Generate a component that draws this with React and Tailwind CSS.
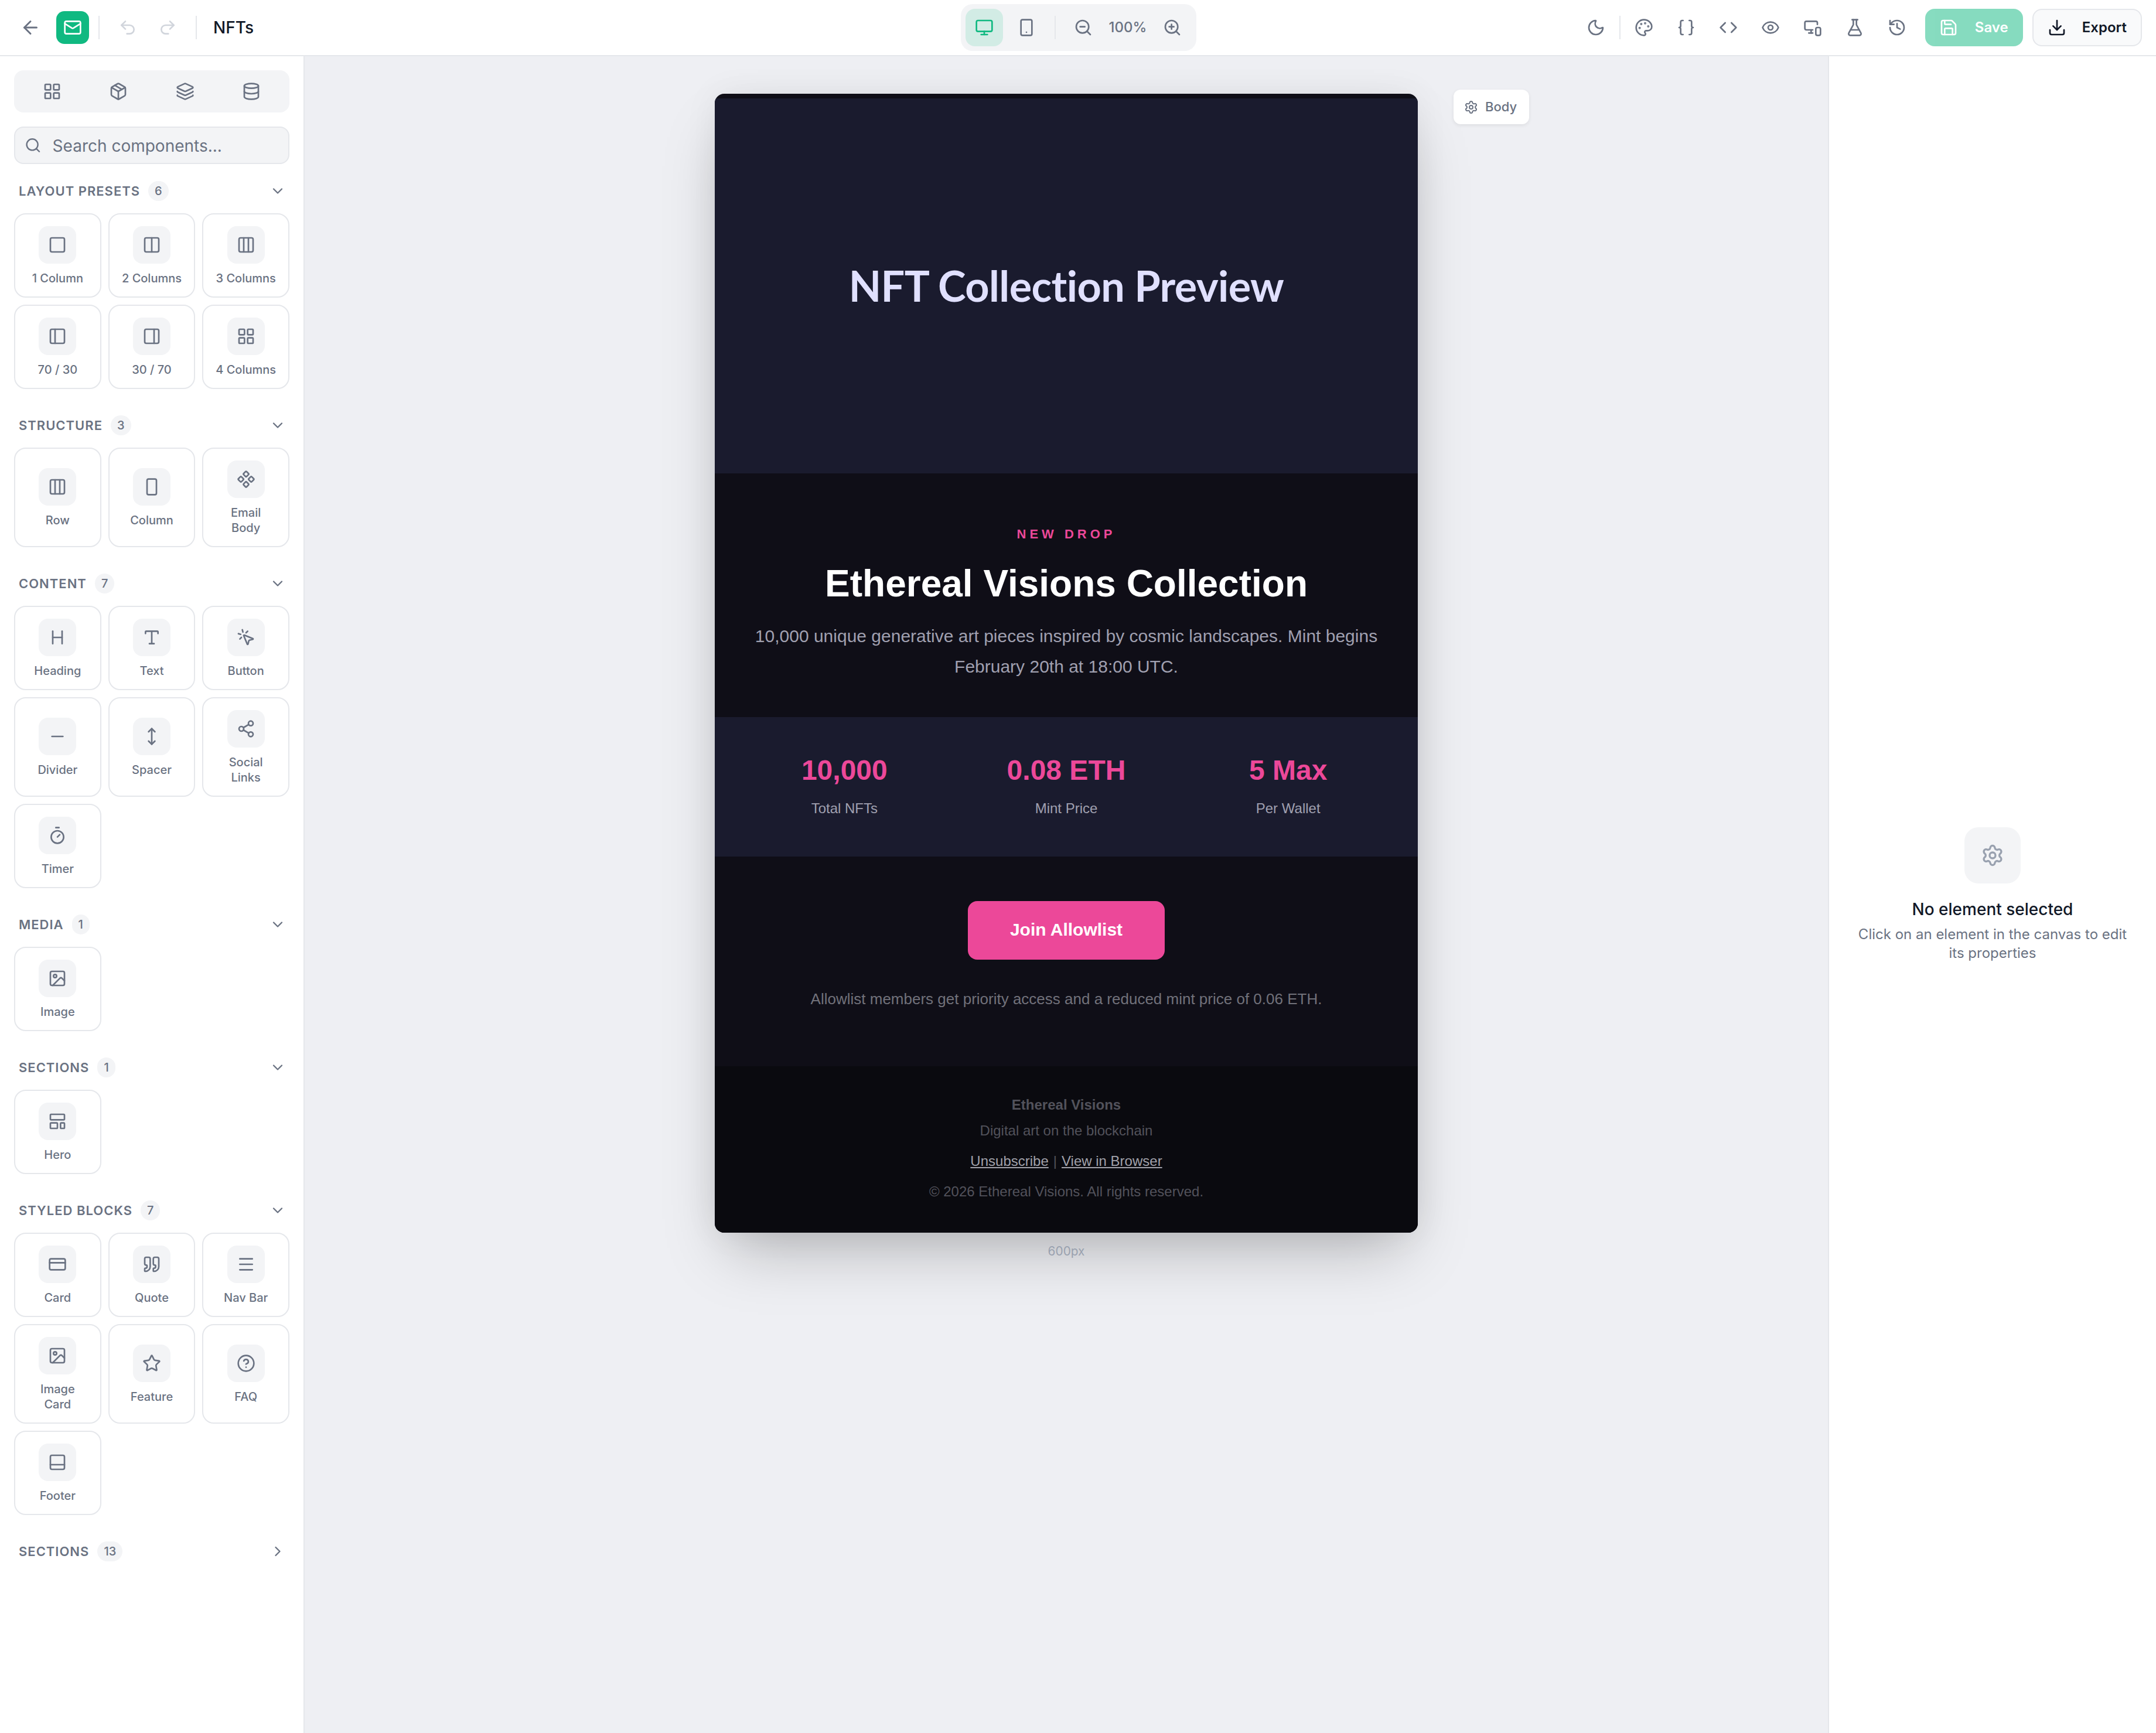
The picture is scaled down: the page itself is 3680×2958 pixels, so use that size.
import React from 'react';
import {
  ArrowLeft, Mail, Undo2, Redo2, Monitor, Smartphone, ZoomOut, ZoomIn, Moon, Palette, Braces, Code,
  Eye, MonitorSmartphone, FlaskConical, History, Save, Download, LayoutGrid, Package, Layers, Database,
  Search, ChevronDown, ChevronRight, Square, Columns2, Columns3, PanelLeft, PanelRight, RectangleVertical,
  Component, Heading, Type, MousePointerClick, Minus, MoveVertical, Share2, Timer, Image, LayoutTemplate,
  CreditCard, Quote, Menu, Star, CircleHelp, PanelBottom, Settings,
} from 'lucide-react';

const sections = [
  {
    title: 'LAYOUT PRESETS',
    items: [
      ['1 Column', Square], ['2 Columns', Columns2], ['3 Columns', Columns3],
      ['70 / 30', PanelLeft], ['30 / 70', PanelRight], ['4 Columns', LayoutGrid],
    ],
  },
  {
    title: 'STRUCTURE',
    items: [['Row', Columns3], ['Column', RectangleVertical], ['Email\nBody', Component]],
  },
  {
    title: 'CONTENT',
    items: [
      ['Heading', Heading], ['Text', Type], ['Button', MousePointerClick], ['Divider', Minus],
      ['Spacer', MoveVertical], ['Social\nLinks', Share2], ['Timer', Timer],
    ],
  },
  { title: 'MEDIA', items: [['Image', Image]] },
  { title: 'SECTIONS', items: [['Hero', LayoutTemplate]] },
  {
    title: 'STYLED BLOCKS',
    items: [
      ['Card', CreditCard], ['Quote', Quote], ['Nav Bar', Menu], ['Image\nCard', Image],
      ['Feature', Star], ['FAQ', CircleHelp], ['Footer', PanelBottom],
    ],
  },
];

const toolIcons = [Palette, Braces, Code, Eye, MonitorSmartphone, FlaskConical, History];
const stats = [['10,000', 'Total NFTs'], ['0.08 ETH', 'Mint Price'], ['5 Max', 'Per Wallet']];

const ToolButton = ({ icon: Icon }) => (
  <button className="flex h-[64px] w-[72px] items-center justify-center text-gray-500">
    <Icon size={32} />
  </button>
);

const Header = () => (
  <header className="grid h-[96px] shrink-0 grid-cols-[1fr_auto_1fr] items-center border-b-2 border-[#e5e7eb] bg-white">
    <div className="flex items-center pl-[32px]">
      <button className="flex w-[40px] justify-center text-gray-500"><ArrowLeft size={36} /></button>
      <div className="ml-[24px] flex h-[56px] w-[56px] items-center justify-center rounded-[14px] bg-[#10b981] text-white">
        <Mail size={32} />
      </div>
      <div className="ml-[16px] h-[40px] w-[2px] bg-[#e5e7eb]" />
      <div className="ml-[20px] flex gap-[12px] text-gray-300">
        <button className="flex w-[56px] justify-center"><Undo2 size={32} /></button>
        <button className="flex w-[56px] justify-center"><Redo2 size={32} /></button>
      </div>
      <div className="ml-[20px] h-[40px] w-[2px] bg-[#e5e7eb]" />
      <h1 className="ml-[28px] text-[28px] font-medium text-[#111827]">NFTs</h1>
    </div>

    <div className="ml-[2px] flex h-[80px] w-[402px] items-center rounded-[20px] bg-[#f3f4f6] pl-[8px]">
      <button className="flex h-[64px] w-[64px] items-center justify-center rounded-[16px] bg-[#d2ece5] text-[#10b981]">
        <Monitor size={32} />
      </button>
      <button className="ml-[8px] flex h-[64px] w-[64px] items-center justify-center text-gray-500">
        <Smartphone size={32} />
      </button>
      <div className="ml-[16px] h-[40px] w-[2px] bg-[#e5e7eb]" />
      <button className="ml-[19px] flex w-[56px] justify-center text-gray-500"><ZoomOut size={32} /></button>
      <span className="w-[96px] text-center text-[24px] font-medium text-gray-500">100%</span>
      <button className="flex w-[56px] justify-center text-gray-500"><ZoomIn size={32} /></button>
    </div>

    <div className="flex items-center justify-end pr-[24px]">
      <ToolButton icon={Moon} />
      <div className="mx-[4px] h-[40px] w-[2px] bg-[#e5e7eb]" />
      {toolIcons.map((Icon, i) => <ToolButton key={i} icon={Icon} />)}
      <button className="ml-[12px] flex h-[64px] w-[167px] items-center gap-[29px] rounded-[16px] bg-[#10b981] pl-[24px] text-[24px] font-semibold text-white opacity-50">
        <Save size={32} />
        Save
      </button>
      <button className="ml-[16px] flex h-[64px] items-center gap-[27px] rounded-[16px] border-2 border-[#e5e7eb] bg-[#f9fafb] px-[24px] text-[24px] font-semibold text-[#111827]">
        <Download size={32} />
        Export
      </button>
    </div>
  </header>
);

const SectionHeader = ({ title, count, open = true }) => (
  <div className="flex h-[36px] items-center pl-[8px] pr-[6px]">
    <span className="text-[22px] font-semibold tracking-[1px] text-gray-500">{title}</span>
    <span className="ml-[14px] flex h-[34px] items-center justify-center rounded-full bg-[#f3f4f6] px-[11px] text-[20px] font-medium text-gray-500">
      {count}
    </span>
    {open
      ? <ChevronDown size={28} className="ml-auto text-gray-500" />
      : <ChevronRight size={28} className="ml-auto text-gray-500" />}
  </div>
);

const BlockCard = ({ label, icon: Icon }) => (
  <div className="flex min-h-[144px] flex-col items-center justify-center gap-[12px] rounded-[20px] border-2 border-[#e5e7eb] bg-white px-[8px] pb-[18px] pt-[20px] text-center">
    <div className="flex h-[64px] w-[64px] items-center justify-center rounded-[16px] bg-[#f3f4f6] text-gray-500">
      <Icon size={32} />
    </div>
    <span className="whitespace-pre-line text-[20px] leading-[26px] font-medium text-gray-500">{label}</span>
  </div>
);

const Sidebar = () => (
  <aside className="w-[520px] shrink-0 border-r-2 border-[#e5e7eb] bg-white px-[24px] pt-[24px]">
    <div className="grid h-[72px] grid-cols-4 items-center rounded-[16px] bg-[#f3f4f6] px-[8px] text-gray-500">
      {[LayoutGrid, Package, Layers, Database].map((Icon, i) => (
        <button key={i} className="flex justify-center"><Icon size={32} /></button>
      ))}
    </div>
    <div className="mt-[24px] flex h-[64px] items-center gap-[19px] rounded-[16px] border-2 border-[#e5e7eb] bg-[#f3f4f6] pl-[16px]">
      <Search size={32} className="text-gray-500" />
      <input
        placeholder="Search components..."
        className="w-full bg-transparent pt-[2px] text-[28px] outline-none placeholder:text-gray-500"
      />
    </div>
    <div className="mt-[28px]">
      {sections.map((s) => (
        <section key={s.title} className="mb-[44px]">
          <SectionHeader title={s.title} count={s.items.length} />
          <div className="mt-[20px] grid grid-cols-3 gap-[12px]">
            {s.items.map(([label, icon]) => <BlockCard key={label} label={label} icon={icon} />)}
          </div>
        </section>
      ))}
      <SectionHeader title="SECTIONS" count={13} open={false} />
    </div>
  </aside>
);

const EmailPreview = () => (
  <div className="relative w-[1200px]">
    <button className="absolute left-[1261px] top-[-7px] flex h-[59px] w-[129px] items-center gap-[12px] rounded-[12px] bg-white pl-[18px] text-[22px] font-medium text-gray-500 shadow-[0_2px_6px_rgba(0,0,0,0.08)]">
      <Settings size={24} />
      Body
    </button>
    <div className="overflow-hidden rounded-[16px] bg-[#0f0e17] pt-[8px] font-['Liberation_Sans',sans-serif] shadow-[0_50px_100px_-24px_rgba(0,0,0,0.25),0_0_60px_rgba(0,0,0,0.06)]">
      <div className="flex h-[640px] items-center justify-center bg-[#1a1b2e] pb-[3px]">
        <h2 className="font-['Lato',sans-serif] text-[72px] font-bold tracking-[-0.6px] text-[#e0e0ff]">NFT Collection Preview</h2>
      </div>
      <div className="h-[416px] px-[60px] pt-[87px] text-center">
        <p className="text-[22px] font-bold tracking-[6px] text-[#ec4899]">NEW DROP</p>
        <h3 className="mt-[30px] text-[64px] leading-[76px] font-bold text-white">Ethereal Visions Collection</h3>
        <p className="mt-[26px] text-[30px] leading-[52px] text-[#a0a0b0]">
          10,000 unique generative art pieces inspired by cosmic landscapes. Mint begins February 20th at 18:00 UTC.
        </p>
      </div>
      <div className="grid h-[238px] grid-cols-3 bg-[#1a1b2e] px-[32px] pt-[63px] text-center">
        {stats.map(([value, label]) => (
          <div key={label}>
            <div className="text-[48px] leading-[56px] font-bold text-[#ec4899]">{value}</div>
            <div className="mt-[23px] text-[24px] leading-[28px] text-[#a0a0b0]">{label}</div>
          </div>
        ))}
      </div>
      <div className="flex h-[358px] flex-col items-center pt-[76px]">
        <a className="flex h-[100px] w-[336px] items-center justify-center rounded-[16px] bg-[#ec4899] pb-[4px] text-[30px] font-bold text-white">
          Join Allowlist
        </a>
        <p className="mt-[48px] text-[26px] leading-[38px] text-[#71717a]">
          Allowlist members get priority access and a reduced mint price of 0.06 ETH.
        </p>
      </div>
      <div className="flex h-[284px] flex-col items-center bg-[#0a0a0f] pt-[52px] text-[24px] leading-[28px] text-[#52525b]">
        <p className="font-bold">Ethereal Visions</p>
        <p className="mt-[16px]">Digital art on the blockchain</p>
        <p className="mt-[24px] text-[#52525b]">
          <a className="text-[#a1a1aa] underline">Unsubscribe</a>
          <span className="mx-[8px]">|</span>
          <a className="text-[#a1a1aa] underline">View in Browser</a>
        </p>
        <p className="mt-[24px] text-[24px]">© 2026 Ethereal Visions. All rights reserved.</p>
      </div>
    </div>
    <p className="mt-[16px] text-center text-[20.8px] text-gray-400">600px</p>
  </div>
);

const RightPanel = () => (
  <aside className="flex w-[560px] shrink-0 flex-col items-center justify-center border-l-2 border-[#e5e7eb] bg-white px-[40px] text-center">
    <div className="flex h-[96px] w-[96px] items-center justify-center rounded-[24px] bg-[#f3f4f6] text-gray-400">
      <Settings size={40} />
    </div>
    <p className="mt-[24px] text-[28px] leading-[40px] font-medium text-[#111827]">No element selected</p>
    <p className="mt-[7px] text-[24px] leading-[32px] text-gray-500">Click on an element in the canvas to edit its properties</p>
  </aside>
);

export default function App() {
  return (
    <div className="flex h-screen w-screen flex-col overflow-hidden font-['Inter',sans-serif]">
      <Header />
      <div className="flex min-h-0 flex-1">
        <Sidebar />
        <main className="flex flex-1 flex-col items-center bg-[#eeeff3] pt-[64px]">
          <EmailPreview />
        </main>
        <RightPanel />
      </div>
    </div>
  );
}
